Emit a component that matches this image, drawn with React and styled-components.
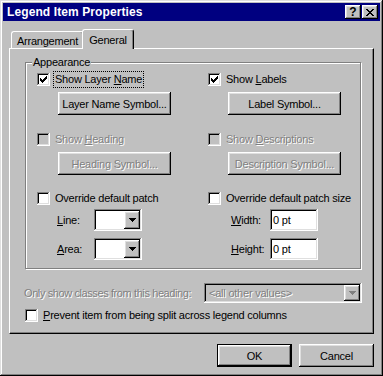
import React from 'react';
import styled, { createGlobalStyle, css } from 'styled-components';

const GlobalStyle = createGlobalStyle`
  html, body { margin: 0; padding: 0; background: #c0c0c0; }
  body { font-family: "Liberation Sans", Arial, sans-serif; font-size: 11px; letter-spacing: -0.22px; color: #000; }
  * { box-sizing: border-box; }
`;

const raised = css`
  box-shadow: inset -1px -1px #000, inset 1px 1px #fff, inset -2px -2px #808080, inset 2px 2px #dfdfdf;
`;
const sunken = css`
  box-shadow: inset -1px -1px #fff, inset 1px 1px #808080, inset -2px -2px #dfdfdf, inset 2px 2px #000;
`;
const disabledText = css`
  color: #808080;
  text-shadow: 1px 1px 0 #fff;
`;

const Window = styled.div`
  width: 383px;
  height: 376px;
  background: #c0c0c0;
  padding: 3px;
  box-shadow: inset -1px -1px #000, inset 1px 1px #dfdfdf, inset -2px -2px #808080, inset 2px 2px #fff;
  display: flex;
  flex-direction: column;
`;

const TitleBar = styled.div`
  height: 18px;
  background: #000080;
  color: #fff;
  display: flex;
  align-items: center;
  padding: 0 2px 0 2px;
  font-weight: bold;
  font-size: 12px;
  letter-spacing: 0.1px;
`;
const TitleText = styled.span`
  flex: 1;
  padding-left: 2px;
`;
const TitleButton = styled.div`
  width: 16px;
  height: 14px;
  background: #c0c0c0;
  ${raised}
  display: flex;
  align-items: center;
  justify-content: center;
  color: #000;
  font-weight: bold;
  font-size: 12px;
  line-height: 14px;
  margin-left: ${p => p.$gap || 0}px;
`;

const Body = styled.div`
  padding: 8px 6px 0 6px;
  display: flex;
  flex-direction: column;
`;

const TabStrip = styled.div`
  display: flex;
  align-items: flex-end;
  height: 19px;
  padding-left: 2px;
  position: relative;
  z-index: 1;
`;
const Tab = styled.div`
  width: ${p => p.$w}px;
  height: ${p => (p.$active ? 20 : 17)}px;
  margin-bottom: ${p => (p.$active ? -1 : 0)}px;
  margin-left: ${p => (p.$active ? -2 : 0)}px;
  padding-top: ${p => (p.$active ? 0 : 1)}px;
  background: #c0c0c0;
  border-top: 1px solid #fff;
  border-left: 1px solid #fff;
  border-right: 1px solid #000;
  box-shadow: inset -1px 0 #808080;
  border-radius: 3px 3px 0 0;
  display: flex;
  align-items: center;
  justify-content: center;
  position: relative;
  z-index: ${p => (p.$active ? 2 : 1)};
`;

const Panel = styled.div`
  height: 286px;
  background: #c0c0c0;
  border-top: 1px solid #fff;
  border-left: 1px solid #fff;
  border-right: 1px solid #000;
  border-bottom: 1px solid #000;
  box-shadow: inset -1px -1px #808080;
  padding: 7px 0 0 15px;
  display: flex;
  flex-direction: column;
`;

const GroupBox = styled.fieldset`
  width: 336px;
  margin: 0;
  padding: 0;
  min-width: 0;
  border: 1px solid #808080;
  box-shadow: 1px 1px 0 #fff, inset 1px 1px 0 #fff;
`;
const Legend = styled.legend`
  margin-left: 6px;
  padding: 0 1px;
  line-height: 13px;
  background: #c0c0c0;
`;

const Columns = styled.div`
  display: grid;
  grid-template-columns: 171px 1fr;
  padding: 2px 0 8px 11px;
`;
const Column = styled.div`
  display: flex;
  flex-direction: column;
  align-items: flex-start;
`;

const CheckRow = styled.div`
  display: flex;
  align-items: center;
  height: 17px;
  margin-top: ${p => p.$mt || 0}px;
  ${p => p.$disabled && disabledText}
`;
const Box = styled.div`
  width: 13px;
  height: 13px;
  flex: none;
  background: ${p => (p.$disabled ? '#c0c0c0' : '#fff')};
  ${sunken}
  display: flex;
  text-shadow: none;
`;
const CheckLabel = styled.span`
  margin-left: 3px;
  padding: 0 1px;
  line-height: 15px;
  white-space: nowrap;
  border: 1px ${p => (p.$focus ? 'dotted #000' : 'solid transparent')};
`;

const PushButton = styled.button`
  font: inherit;
  letter-spacing: inherit;
  width: ${p => p.$w || 75}px;
  height: 23px;
  margin: ${p => p.$mt ?? 4}px 0 0 ${p => p.$indent || 0}px;
  padding: 0;
  background: #c0c0c0;
  border: none;
  color: #000;
  white-space: nowrap;
  ${raised}
  ${p => p.disabled && disabledText}
  ${p =>
    p.$default &&
    css`
      border: 1px solid #000;
    `}
`;

const FieldRow = styled.div`
  display: flex;
  align-items: center;
  margin: ${p => p.$mt || 0}px 0 0 ${p => p.$indent || 0}px;
`;
const FieldLabel = styled.span`
  width: ${p => p.$w}px;
  white-space: nowrap;
`;
const Combo = styled.div`
  width: ${p => p.$w || 48}px;
  height: ${p => p.$h || 22}px;
  background: ${p => (p.$disabled ? '#c0c0c0' : '#fff')};
  ${sunken}
  padding: 2px;
  display: flex;
  align-items: stretch;
`;
const ComboText = styled.span`
  flex: 1;
  padding-left: 3px;
  display: flex;
  align-items: center;
  white-space: nowrap;
  ${p => p.$disabled && disabledText}
`;
const DropButton = styled.div`
  width: 16px;
  background: #c0c0c0;
  ${raised}
  display: flex;
  align-items: center;
  justify-content: center;
`;
const TextField = styled.div`
  width: 48px;
  height: 22px;
  background: #fff;
  ${sunken}
  padding: 0 3px;
  display: flex;
  align-items: center;
`;

const ClassRow = styled.div`
  display: flex;
  align-items: center;
  margin: 14px 0 0 -1px;
`;
const DimText = styled.span`
  width: 180px;
  white-space: nowrap;
  letter-spacing: -0.4px;
  ${disabledText}
`;

const ButtonRow = styled.div`
  display: flex;
  justify-content: flex-end;
  gap: 7px;
  margin-top: 10px;
`;

const CheckMark = () => (
  <svg width="13" height="13" viewBox="0 0 13 13" shapeRendering="crispEdges">
    <path
      fill="#000"
      d="M3 5h1v3H3z M4 6h1v3H4z M5 7h1v3H5z M6 6h1v3H6z M7 5h1v3H7z M8 4h1v3H8z M9 3h1v3H9z"
    />
  </svg>
);

const Arrow = ({ color = '#000' }) => (
  <svg width="7" height="4" viewBox="0 0 7 4" shapeRendering="crispEdges">
    <path fill={color} d="M0 0h7v1H0z M1 1h5v1H1z M2 2h3v1H2z M3 3h1v1H3z" />
  </svg>
);

const CloseIcon = () => (
  <svg width="8" height="7" viewBox="0 0 8 7" shapeRendering="crispEdges">
    <path
      fill="#000"
      d="M0 0h2v1H0z M6 0h2v1H6z M1 1h2v1H1z M5 1h2v1H5z M2 2h4v1H2z M3 3h2v1H3z M2 4h4v1H2z M1 5h2v1H1z M5 5h2v1H5z M0 6h2v1H0z M6 6h2v1H6z"
    />
  </svg>
);

const Check = ({ checked, disabled, focus, label, mt }) => (
  <CheckRow $mt={mt} $disabled={disabled}>
    <Box $disabled={disabled}>{checked && <CheckMark />}</Box>
    <CheckLabel $focus={focus}>{label}</CheckLabel>
  </CheckRow>
);

const DropCombo = ({ w, h, disabled, text }) => (
  <Combo $w={w} $h={h} $disabled={disabled}>
    <ComboText $disabled={disabled}>{text}</ComboText>
    <DropButton>
      <Arrow color={disabled ? '#808080' : '#000'} />
    </DropButton>
  </Combo>
);

export default function App() {
  return (
    <>
      <GlobalStyle />
      <Window>
        <TitleBar>
          <TitleText>Legend Item Properties</TitleText>
          <TitleButton>?</TitleButton>
          <TitleButton $gap={1}>
            <CloseIcon />
          </TitleButton>
        </TitleBar>
        <Body>
          <TabStrip>
            <Tab $w={73}>Arrangement</Tab>
            <Tab $active $w={52}>
              General
            </Tab>
          </TabStrip>
          <Panel>
            <GroupBox>
              <Legend>Appearance</Legend>
              <Columns>
                <Column>
                  <Check
                    checked
                    focus
                    label={
                      <>
                        Show Layer <u>N</u>ame
                      </>
                    }
                  />
                  <PushButton $w={113} $indent={21}>
                    Layer Name Symbol...
                  </PushButton>
                  <Check
                    disabled
                    mt={16}
                    label={
                      <>
                        Show <u>H</u>eading
                      </>
                    }
                  />
                  <PushButton $w={113} $indent={21} disabled>
                    Heading Symbol...
                  </PushButton>
                  <Check mt={15} label="Override default patch" />
                  <FieldRow $mt={2} $indent={20}>
                    <FieldLabel $w={37}>
                      <u>L</u>ine:
                    </FieldLabel>
                    <DropCombo />
                  </FieldRow>
                  <FieldRow $mt={7} $indent={20}>
                    <FieldLabel $w={37}>
                      <u>A</u>rea:
                    </FieldLabel>
                    <DropCombo />
                  </FieldRow>
                </Column>
                <Column>
                  <Check
                    checked
                    label={
                      <>
                        Show <u>L</u>abels
                      </>
                    }
                  />
                  <PushButton $w={113} $indent={20}>
                    Label Symbol...
                  </PushButton>
                  <Check
                    disabled
                    mt={16}
                    label={
                      <>
                        Show <u>D</u>escriptions
                      </>
                    }
                  />
                  <PushButton $w={113} $indent={20} disabled>
                    Description Symbol...
                  </PushButton>
                  <Check mt={15} label="Override default patch size" />
                  <FieldRow $mt={2} $indent={23}>
                    <FieldLabel $w={39}>
                      <u>W</u>idth:
                    </FieldLabel>
                    <TextField>0 pt</TextField>
                  </FieldRow>
                  <FieldRow $mt={7} $indent={23}>
                    <FieldLabel $w={39}>
                      <u>H</u>eight:
                    </FieldLabel>
                    <TextField>0 pt</TextField>
                  </FieldRow>
                </Column>
              </Columns>
            </GroupBox>
            <ClassRow>
              <DimText>Only show classes from this heading:</DimText>
              <DropCombo w={158} h={20} disabled text="<all other values>" />
            </ClassRow>
            <Check
              mt={4}
              label={
                <>
                  <u>P</u>revent item from being split across legend columns
                </>
              }
            />
          </Panel>
          <ButtonRow>
            <PushButton $default $mt={0}>
              OK
            </PushButton>
            <PushButton $mt={0}>Cancel</PushButton>
          </ButtonRow>
        </Body>
      </Window>
    </>
  );
}
